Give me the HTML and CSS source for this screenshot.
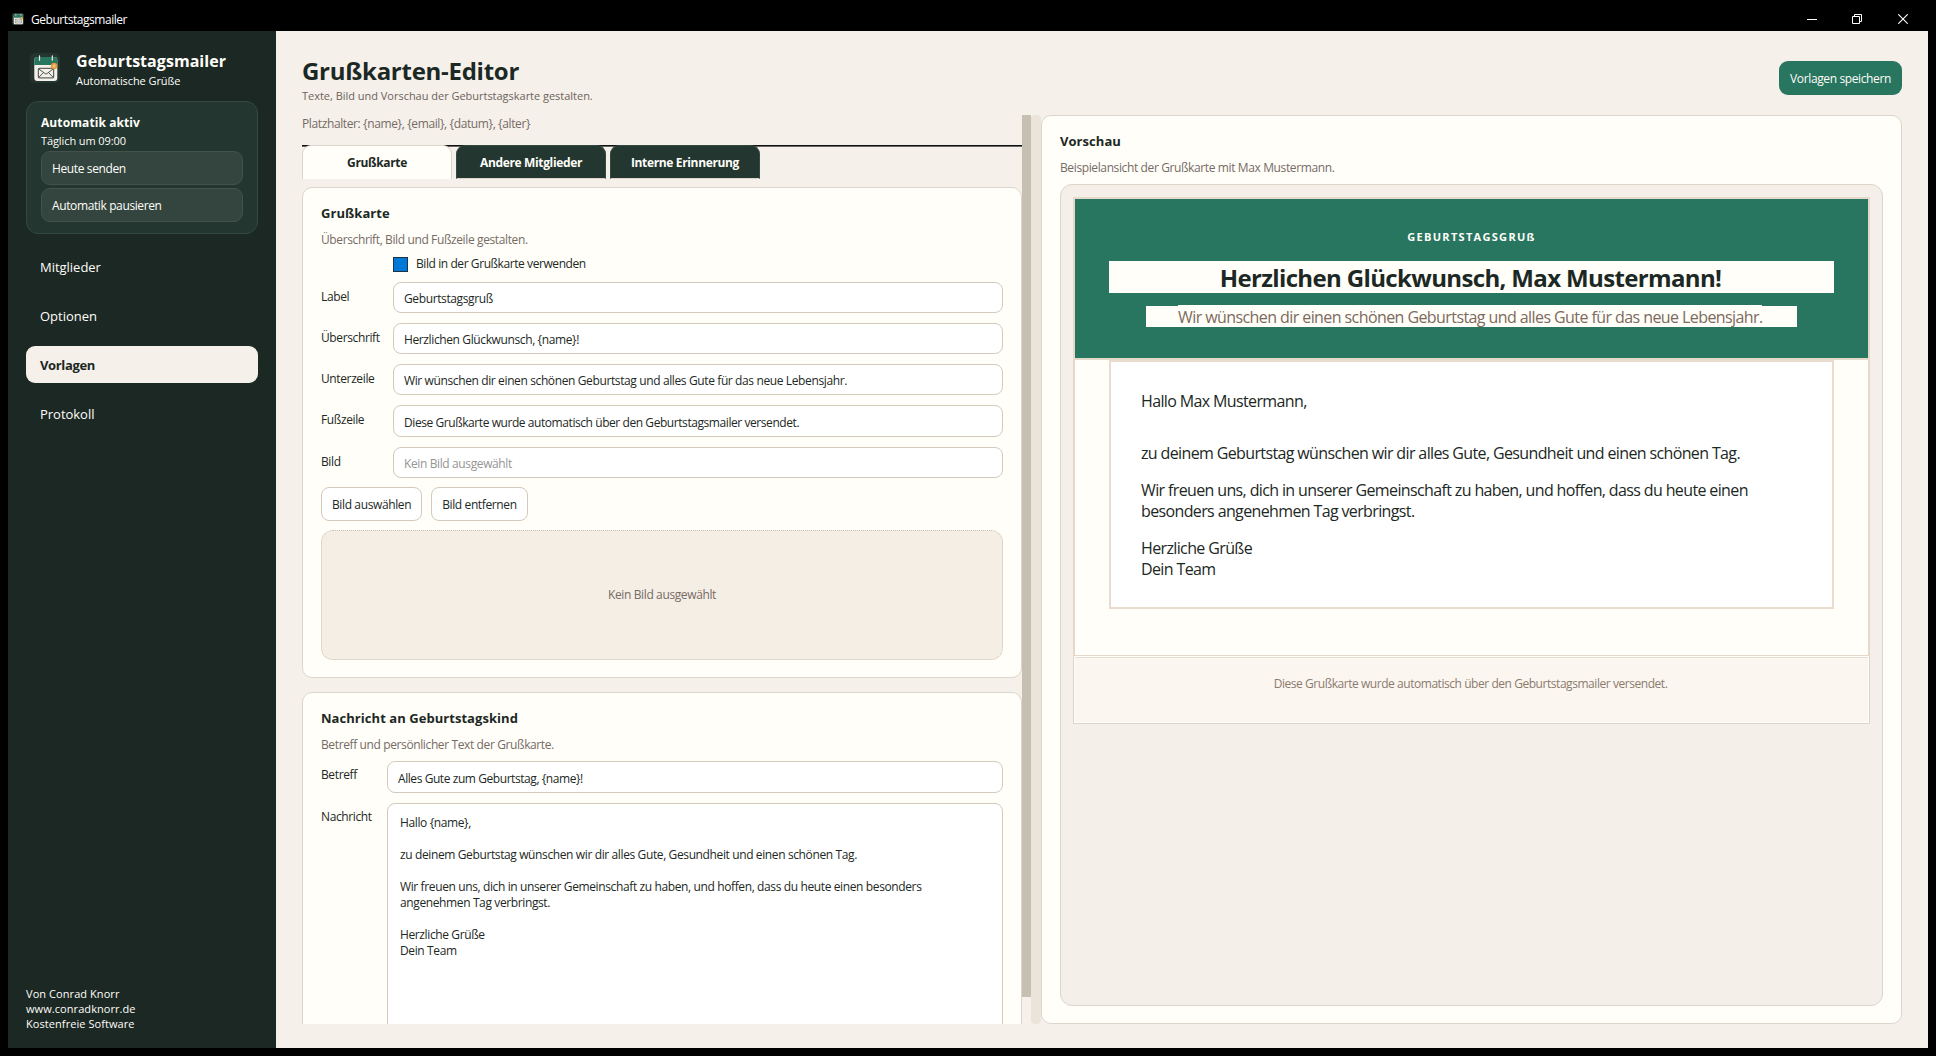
FILE: index.html
```html
<!DOCTYPE html>
<html lang="de">
<head>
  <meta charset="UTF-8">
  <meta name="viewport" content="width=device-width, initial-scale=1">
  <title>Geburtstagsmailer</title>
  <link rel="stylesheet" href="styles.css">
</head>
<body>
  <!-- App-Icon, wird in Titelleiste und Seitenleiste benutzt -->
  <svg class="defs" width="0" height="0">
    <symbol id="app-icon" viewBox="0 0 30 30">
      <rect width="30" height="30" rx="5" fill="#24352f"/>
      <rect x="4.3" y="4" width="23" height="24" rx="3" fill="#f5f0e9"/>
      <path d="M4.3 12V7a3 3 0 0 1 3-3h17a3 3 0 0 1 3 3v5z" fill="#287560"/>
      <path d="M9.5 2.8v4.4M22.3 2.8v4.4" stroke="#f5f0e9" stroke-width="1.2" stroke-linecap="round"/>
      <rect x="8.3" y="15.3" width="15.4" height="9.6" rx=".8" fill="none" stroke="#3a4742" stroke-width="1"/>
      <path d="M8.5 15.8l7.5 5.4 7.5-5.4M8.5 24.6l5-5M23.5 24.6l-5-5" fill="none" stroke="#3a4742" stroke-width=".9"/>
      <circle cx="24.1" cy="13" r="3.2" fill="#e39a37"/>
      <path d="M24.1 11.2v3.6M22.3 13h3.6" stroke="#f7d9a8" stroke-width=".8"/>
    </symbol>
  </svg>

  <div class="titlebar">
    <svg class="titlebar-icon"><use href="#app-icon"/></svg>
    <span class="titlebar-text">Geburtstagsmailer</span>
    <div class="window-buttons">
      <svg width="10" height="10"><path d="M0 5.5h10" stroke="#fff"/></svg>
      <svg width="10" height="10" fill="none" stroke="#fff"><path d="M.5 2.5h7v7h-7zM2.5 2.5v-2h7v7h-2"/></svg>
      <svg width="10" height="10"><path d="M.3.3l9.4 9.4M9.7.3L.3 9.7" stroke="#fff" stroke-width="1.1"/></svg>
    </div>
  </div>

  <div class="window">
    <!-- Seitenleiste -->
    <aside class="sidebar">
      <div class="brand">
        <svg class="brand-icon"><use href="#app-icon"/></svg>
        <div>
          <div class="brand-name">Geburtstagsmailer</div>
          <div class="brand-sub">Automatische Grüße</div>
        </div>
      </div>
      <div class="status">
        <div class="status-title">Automatik aktiv</div>
        <div class="status-time">Täglich um 09:00</div>
        <button class="status-btn">Heute senden</button>
        <button class="status-btn">Automatik pausieren</button>
      </div>
      <nav class="menu">
        <a class="menu-item">Mitglieder</a>
        <a class="menu-item">Optionen</a>
        <a class="menu-item active">Vorlagen</a>
        <a class="menu-item">Protokoll</a>
      </nav>
      <div class="credits">
        <div>Von Conrad Knorr</div>
        <div>www.conradknorr.de</div>
        <div>Kostenfreie Software</div>
      </div>
    </aside>

    <main class="main">
      <header class="header">
        <div>
          <h1 class="page-title">Grußkarten-Editor</h1>
          <p class="page-sub">Texte, Bild und Vorschau der Geburtstagskarte gestalten.</p>
        </div>
        <button class="save-btn">Vorlagen speichern</button>
      </header>

      <div class="split">
        <!-- Editor -->
        <section class="editor">
          <p class="hint">Platzhalter: {name}, {email}, {datum}, {alter}</p>
          <div class="tabs">
            <div class="tab tab-active">Grußkarte</div>
            <div class="tab">Andere Mitglieder</div>
            <div class="tab">Interne Erinnerung</div>
          </div>

          <div class="card">
            <h2 class="card-title">Grußkarte</h2>
            <p class="card-sub">Überschrift, Bild und Fußzeile gestalten.</p>
            <div class="form">
              <div class="check"><span class="checkbox"></span>Bild in der Grußkarte verwenden</div>
              <label>Label</label>
              <input class="field" type="text" value="Geburtstagsgruß">
              <label>Überschrift</label>
              <input class="field" type="text" value="Herzlichen Glückwunsch, {name}!">
              <label>Unterzeile</label>
              <input class="field" type="text" value="Wir wünschen dir einen schönen Geburtstag und alles Gute für das neue Lebensjahr.">
              <label>Fußzeile</label>
              <input class="field field-tall" type="text" value="Diese Grußkarte wurde automatisch über den Geburtstagsmailer versendet.">
              <label>Bild</label>
              <input class="field" type="text" placeholder="Kein Bild ausgewählt">
            </div>
            <div class="actions">
              <button class="btn">Bild auswählen</button>
              <button class="btn">Bild entfernen</button>
            </div>
            <div class="dropzone">Kein Bild ausgewählt</div>
          </div>

          <div class="card card-message">
            <h2 class="card-title">Nachricht an Geburtstagskind</h2>
            <p class="card-sub">Betreff und persönlicher Text der Grußkarte.</p>
            <div class="form form-message">
              <label>Betreff</label>
              <input class="field field-tall" type="text" value="Alles Gute zum Geburtstag, {name}!">
              <label>Nachricht</label>
              <textarea class="message">Hallo {name},

zu deinem Geburtstag wünschen wir dir alles Gute, Gesundheit und einen schönen Tag.

Wir freuen uns, dich in unserer Gemeinschaft zu haben, und hoffen, dass du heute einen besonders angenehmen Tag verbringst.

Herzliche Grüße
Dein Team</textarea>
            </div>
          </div>
        </section>
        <div class="scrollbar"><div class="scroll-thumb"></div></div>
        <div class="splitter"></div>

        <!-- Vorschau -->
        <section class="preview">
          <h2 class="card-title">Vorschau</h2>
          <p class="card-sub">Beispielansicht der Grußkarte mit Max Mustermann.</p>
          <div class="preview-box">
            <div class="mail">
              <div class="mail-head">
                <div class="mail-label">GEBURTSTAGSGRUß</div>
                <div class="mail-title">Herzlichen Glückwunsch, Max Mustermann!</div>
                <div class="mail-sub"><span>Wir wünschen dir einen schönen Geburtstag und alles Gute für das neue Lebensjahr.</span></div>
              </div>
              <div class="mail-body">
                <div class="mail-text">
                  <p class="greeting">Hallo Max Mustermann,</p>
                  <p>zu deinem Geburtstag wünschen wir dir alles Gute, Gesundheit und einen schönen Tag.</p>
                  <p>Wir freuen uns, dich in unserer Gemeinschaft zu haben, und hoffen, dass du heute einen<br>besonders angenehmen Tag verbringst.</p>
                  <p>Herzliche Grüße<br>Dein Team</p>
                </div>
              </div>
            </div>
            <div class="mail-foot"><div class="mail-foot-text">Diese Grußkarte wurde automatisch über den Geburtstagsmailer versendet.</div></div>
          </div>
        </section>
      </div>
    </main>
  </div>
</body>
</html>
```
FILE: styles.css
```css
* {
  margin: 0;
  padding: 0;
  box-sizing: border-box;
}
body {
  width: 1936px;
  height: 1056px;
  overflow: hidden;
  background: #000;
  color: #1c2824;
  font-family: "Segoe UI", "Open Sans", sans-serif;
  font-size: 12px;
  line-height: 16px;
  letter-spacing: -0.38px;
}
button, input, textarea {
  font: inherit;
  letter-spacing: inherit;
  color: inherit;
  outline: none;
}
.defs {
  position: absolute;
}

/* Titelleiste */
.titlebar {
  height: 31px;
  padding: 6px 28px 0 12px;
  display: flex;
  align-items: center;
  color: #fff;
}
.titlebar-icon {
  width: 12px;
  height: 12px;
}
.titlebar-text {
  margin: 2px 0 0 7px;
  letter-spacing: -0.45px;
}
.window-buttons {
  margin-left: auto;
  display: flex;
  gap: 36px;
}
.window-buttons svg {
  display: block;
}
.window-buttons svg:first-child {
  margin-right: -1px;
}

.window {
  height: 1017px;
  margin: 0 8px;
  display: flex;
  background: #f5f0ea;
}

/* Seitenleiste */
.sidebar {
  width: 268px;
  padding: 22px 18px 17px;
  display: flex;
  flex-direction: column;
  background: #1c2824;
  color: #fffef9;
}
.brand {
  height: 48px;
  padding-left: 4px;
  display: flex;
  gap: 16px;
}
.brand-icon {
  width: 30px;
  height: 30px;
}
.brand-name {
  line-height: 20px;
  margin-top: -2px;
  font-size: 16px;
  font-weight: 700;
  letter-spacing: 0.04px;
}
.brand-sub {
  margin-top: 2px;
  font-size: 11px;
  letter-spacing: -0.08px;
}
.status {
  height: 133px;
  padding: 13px 14px 0;
  background: #233630;
  border: 1px solid #31493f;
  border-radius: 12px;
  display: flex;
  flex-direction: column;
}
.status-title {
  font-weight: 700;
  letter-spacing: 0.09px;
}
.status-time {
  margin: 2px 0;
  font-size: 11px;
  letter-spacing: -0.09px;
}
.status-btn {
  height: 34px;
  margin-bottom: 3px;
  padding: 2px 0 0 10px;
  text-align: left;
  font-weight: 500;
  background: #34453f;
  border: 1px solid #43534c;
  border-radius: 9px;
}
.menu {
  margin-top: 14px;
  display: flex;
  flex-direction: column;
  gap: 12px;
}
.menu-item {
  height: 37px;
  padding-left: 14px;
  line-height: 39px;
  font-size: 13px;
  font-weight: 500;
  letter-spacing: -0.02px;
  border-radius: 9px;
}
.menu-item.active {
  background: #f5f0e9;
  color: #1c2824;
  font-weight: 700;
  letter-spacing: -0.35px;
}
.credits {
  margin-top: auto;
  font-size: 11px;
  line-height: 15px;
  letter-spacing: 0.07px;
}

/* Hauptbereich */
.main {
  flex: 1;
  min-width: 0;
  padding: 24px 26px;
  display: flex;
  flex-direction: column;
}
.header {
  height: 60px;
  display: flex;
  justify-content: space-between;
}
.page-title {
  font-size: 24px;
  line-height: 32px;
  letter-spacing: -0.27px;
}
.page-sub {
  margin-top: 1px;
  font-size: 11px;
  letter-spacing: -0.02px;
  color: #6d635c;
}
.save-btn {
  width: 123px;
  height: 34px;
  margin-top: 6px;
  padding-top: 2px;
  background: #287560;
  border: none;
  border-radius: 9px;
  color: #fffef9;
  font-weight: 500;
}
.split {
  flex: 1;
  min-height: 0;
  display: flex;
}
.editor {
  width: 720px;
  overflow: hidden;
}
.scrollbar {
  width: 9px;
}
.scroll-thumb {
  height: 882px;
  background: #c7c0b2;
}
.splitter {
  width: 10px;
  background: #ebe4da;
  border-radius: 4px;
}
.hint {
  height: 30px;
  padding-top: 1px;
  color: #756b65;
}

/* Reiter */
.tabs {
  height: 42px;
  display: flex;
  gap: 4px;
  background: linear-gradient(#111 1px, #666 1px, #666 2px, transparent 2px);
}
.tab {
  width: 150px;
  height: 34px;
  line-height: 34px;
  text-align: center;
  font-weight: 700;
  letter-spacing: -0.35px;
  color: #fffef9;
  background: #233630;
  border: 1px solid #31493f;
  border-bottom-color: #ddd5c9;
  border-radius: 9px 9px 0 0;
}
.tab-active {
  color: #1c2824;
  background: #fffef9;
  border-color: #ddd5c9;
  border-bottom: none;
}

/* Karten */
.card {
  height: 491px;
  margin-bottom: 14px;
  padding: 16px 18px;
  background: #fffef9;
  border: 1px solid #ddd5c9;
  border-radius: 10px;
}
.card-message {
  height: 420px;
}
.card-title {
  font-size: 13px;
  line-height: 18px;
  letter-spacing: 0.05px;
}
.card-sub {
  margin: 10px 0 8px;
  color: #756b65;
}
.form {
  display: grid;
  grid-template-columns: 72px 1fr;
  row-gap: 10px;
}
.form-message {
  grid-template-columns: 66px 1fr;
}
.form label {
  padding-top: 7px;
}
.form-message label {
  padding-top: 6px;
}
.check {
  grid-column: 2;
  height: 16px;
  display: flex;
  align-items: flex-end;
  gap: 8px;
  letter-spacing: -0.42px;
}
.checkbox {
  width: 15px;
  height: 15px;
  background: #0078d7;
  border: 1px solid #1d3346;
}
.field {
  width: 100%;
  height: 31px;
  padding: 2px 10px 0;
  background: #fff;
  border: 1px solid #d3cabc;
  border-radius: 8px;
}
.field-tall {
  height: 32px;
  letter-spacing: -0.43px;
}
.field::placeholder {
  color: #969593;
}
.actions {
  margin: 9px 0;
  display: flex;
  gap: 9px;
}
.btn {
  height: 34px;
  padding: 1px 10px 0;
  font-weight: 500;
  background: #fff;
  border: 1px solid #d3cabc;
  border-radius: 8px;
}
.dropzone {
  height: 130px;
  display: flex;
  align-items: center;
  justify-content: center;
  background: #f5eee5;
  border: 1px dotted #c9bfb0;
  border-radius: 12px;
  color: #756b65;
}
.message {
  width: 100%;
  height: 280px;
  padding: 11px 50px 0 12px;
  resize: none;
  overflow: hidden;
  background: #fff;
  border: 1px solid #d3cabc;
  border-radius: 8px;
}

/* Vorschau */
.preview {
  flex: 1;
  padding: 16px 18px 17px;
  display: flex;
  flex-direction: column;
  background: #fffef9;
  border: 1px solid #ddd5c9;
  border-radius: 10px;
}
.preview-box {
  flex: 1;
  padding: 12px;
  background: #f4efe9;
  border: 1px solid #ddd5c9;
  border-radius: 12px;
}
.mail {
  height: 459px;
  background: #fffef9;
  border: 2px solid #e4d9cb;
  border-bottom-width: 1px;
}
.mail-head {
  height: 161px;
  padding-top: 30px;
  display: flex;
  flex-direction: column;
  align-items: center;
  background: #287560;
  border-bottom: 2px solid #e4d9cb;
}
.mail-label {
  font-size: 11px;
  font-weight: 700;
  letter-spacing: 1.3px;
  color: #fffef9;
}
.mail-title {
  width: 725px;
  height: 32px;
  margin-top: 16px;
  padding-right: 2px;
  line-height: 34px;
  text-align: center;
  font-size: 24px;
  font-weight: 700;
  letter-spacing: -0.64px;
  background: #fffef9;
}
.mail-sub {
  width: 651px;
  height: 21px;
  margin-top: 13px;
  text-align: center;
  font-size: 16px;
  line-height: 20px;
  letter-spacing: -0.58px;
  color: #7c6a5d;
  background: #fffef9;
}
.mail-sub span {
  display: block;
  width: 584px;
  height: 22px;
  margin: -1px auto 0 32px;
  line-height: 24px;
  white-space: nowrap;
  background: #fffef9;
}
.mail-body {
  padding: 0 34px;
}
.mail-text {
  height: 249px;
  padding: 29px 30px 27px;
  font-size: 16px;
  line-height: 21px;
  letter-spacing: -0.63px;
  background: #fff;
  border: 2px solid #e9dccf;
}
.mail-text p {
  margin-bottom: 16px;
}
.mail-text .greeting {
  margin-bottom: 31px;
}
.mail-foot {
  height: 68px;
  padding: 1px;
  background: #fffef9;
  border: 1px solid #ddd5c9;
  border-top: none;
}
.mail-foot-text {
  height: 65px;
  padding: 18px 2px 0 0;
  text-align: center;
  letter-spacing: -0.45px;
  color: #8b7b6e;
  background: #fbf6f0;
  border-top: 1px solid #e6dfd0;
}
```
